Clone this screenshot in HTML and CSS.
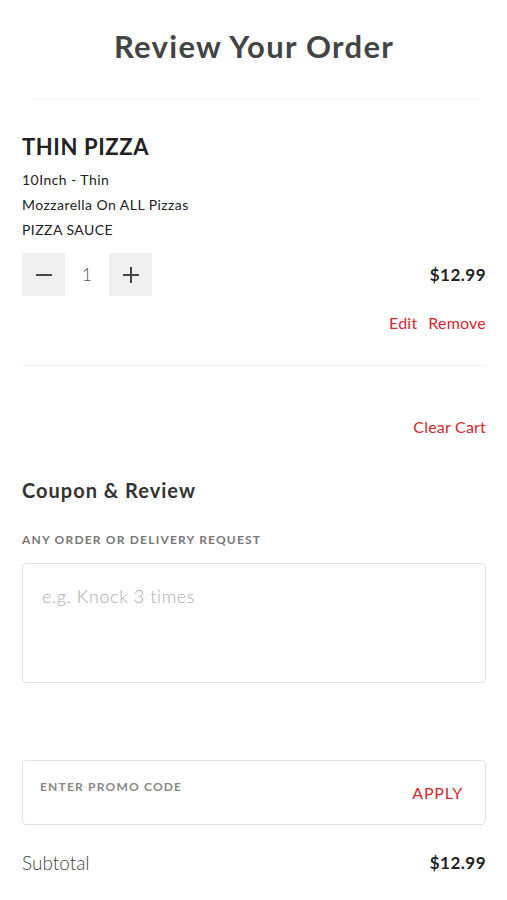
FILE: index.html
```html
<!DOCTYPE html>
<html lang="en">
<head>
<meta charset="utf-8">
<title>Review Your Order</title>
<link rel="stylesheet" href="styles.css">
</head>
<body>
<div class="page">
  <h1 class="title">Review Your Order</h1>
  <div class="rule rule-top"></div>

  <section class="item">
    <h2 class="item-name">THIN PIZZA</h2>
    <ul class="options">
      <li>10Inch - Thin</li>
      <li>Mozzarella On ALL Pizzas</li>
      <li>PIZZA SAUCE</li>
    </ul>
    <div class="qty-row">
      <div class="qty">
        <button class="qty-btn" aria-label="Decrease">
          <svg width="18" height="18" viewBox="0 0 18 18"><path d="M1 9h16" stroke="#444" stroke-width="2"/></svg>
        </button>
        <span class="qty-val">1</span>
        <button class="qty-btn" aria-label="Increase">
          <svg width="18" height="18" viewBox="0 0 18 18"><path d="M1 9h16M9 1v16" stroke="#444" stroke-width="2"/></svg>
        </button>
      </div>
      <span class="price">$12.99</span>
    </div>
    <div class="actions">
      <a class="link">Edit</a>
      <a class="link">Remove</a>
    </div>
  </section>
  <div class="rule"></div>

  <div class="clear-row"><a class="link">Clear Cart</a></div>

  <h3 class="section-title">Coupon &amp; Review</h3>
  <label class="field-label">ANY ORDER OR DELIVERY REQUEST</label>
  <div class="textarea">e.g. Knock 3 times</div>

  <div class="promo">
    <span class="promo-ph">ENTER PROMO CODE</span>
    <a class="link apply">APPLY</a>
  </div>

  <div class="total-row">
    <span class="total-label">Subtotal</span>
    <span class="price">$12.99</span>
  </div>
</div>
</body>
</html>
```

FILE: styles.css
```css
* { box-sizing: border-box; }
html, body { margin: 0; padding: 0; background: #fff; }
body {
  font-family: Lato, "Open Sans", sans-serif;
  color: #333;
}
.page {
  padding: 0 21px 0 22px;
}
.title {
  margin: 0;
  padding-top: 28px;
  font-size: 31px;
  line-height: 36px;
  font-weight: 700;
  color: #444;
  text-align: center;
  letter-spacing: 1.3px;
}
.rule {
  height: 1px;
  background: #f1f1f1;
}
.rule-top {
  margin: 35px 6px 0 10px;
  background: #f5f5f5;
}
.item {
  padding-top: 34px;
  padding-bottom: 31px;
}
.item-name {
  margin: 0;
  font-size: 22px;
  line-height: 26px;
  font-weight: 700;
  color: #222;
  letter-spacing: 0.6px;
}
.options {
  list-style: none;
  margin: 7px 0 0;
  padding: 0;
  font-size: 14px;
  line-height: 25px;
  color: #222;
  letter-spacing: 0.45px;
}
.qty-row {
  margin-top: 11px;
  display: flex;
  justify-content: space-between;
  align-items: center;
}
.qty {
  display: flex;
  align-items: center;
}
.qty-btn {
  width: 43px;
  height: 43px;
  border: 0;
  padding: 0;
  background: #efefef;
  display: flex;
  align-items: center;
  justify-content: center;
}
.qty-val {
  width: 44px;
  text-align: center;
  font-size: 17px;
  color: #555;
  font-weight: 300;
}
.price {
  font-size: 17px;
  font-weight: 700;
  color: #222;
  letter-spacing: 0.5px;
}
.actions {
  margin-top: 16px;
  display: flex;
  justify-content: flex-end;
  gap: 11px;
}
.link {
  color: #d7262d;
  font-size: 16px;
  line-height: 22px;
  letter-spacing: 0.2px;
}
.clear-row {
  margin-top: 50px;
  display: flex;
  justify-content: flex-end;
}
.section-title {
  margin: 39px 0 0;
  font-size: 20px;
  line-height: 26px;
  font-weight: 700;
  color: #333;
  letter-spacing: 1px;
}
.field-label {
  display: block;
  margin-top: 29px;
  font-size: 12px;
  line-height: 16px;
  font-weight: 700;
  color: #777;
  letter-spacing: 1.2px;
}
.textarea {
  margin-top: 15px;
  height: 120px;
  border: 1px solid #e2e2e2;
  border-radius: 4px;
  padding: 20px 19px;
  font-size: 18px;
  line-height: 24px;
  color: #aaa;
  font-weight: 300;
  letter-spacing: 0.6px;
}
.promo {
  margin-top: 77px;
  height: 65px;
  border: 1px solid #e2e2e2;
  border-radius: 4px;
  padding: 0 22px 0 17px;
  display: flex;
  justify-content: space-between;
  align-items: flex-start;
}
.promo-ph {
  margin-top: 18px;
  font-size: 12px;
  line-height: 16px;
  font-weight: 700;
  color: #888;
  letter-spacing: 1.2px;
}
.apply {
  margin-top: 21px;
  font-size: 16px;
  letter-spacing: 0.8px;
}
.total-row {
  margin-top: 26px;
  display: flex;
  justify-content: space-between;
  align-items: center;
}
.total-label {
  font-size: 19px;
  color: #444;
  font-weight: 300;
}
```
